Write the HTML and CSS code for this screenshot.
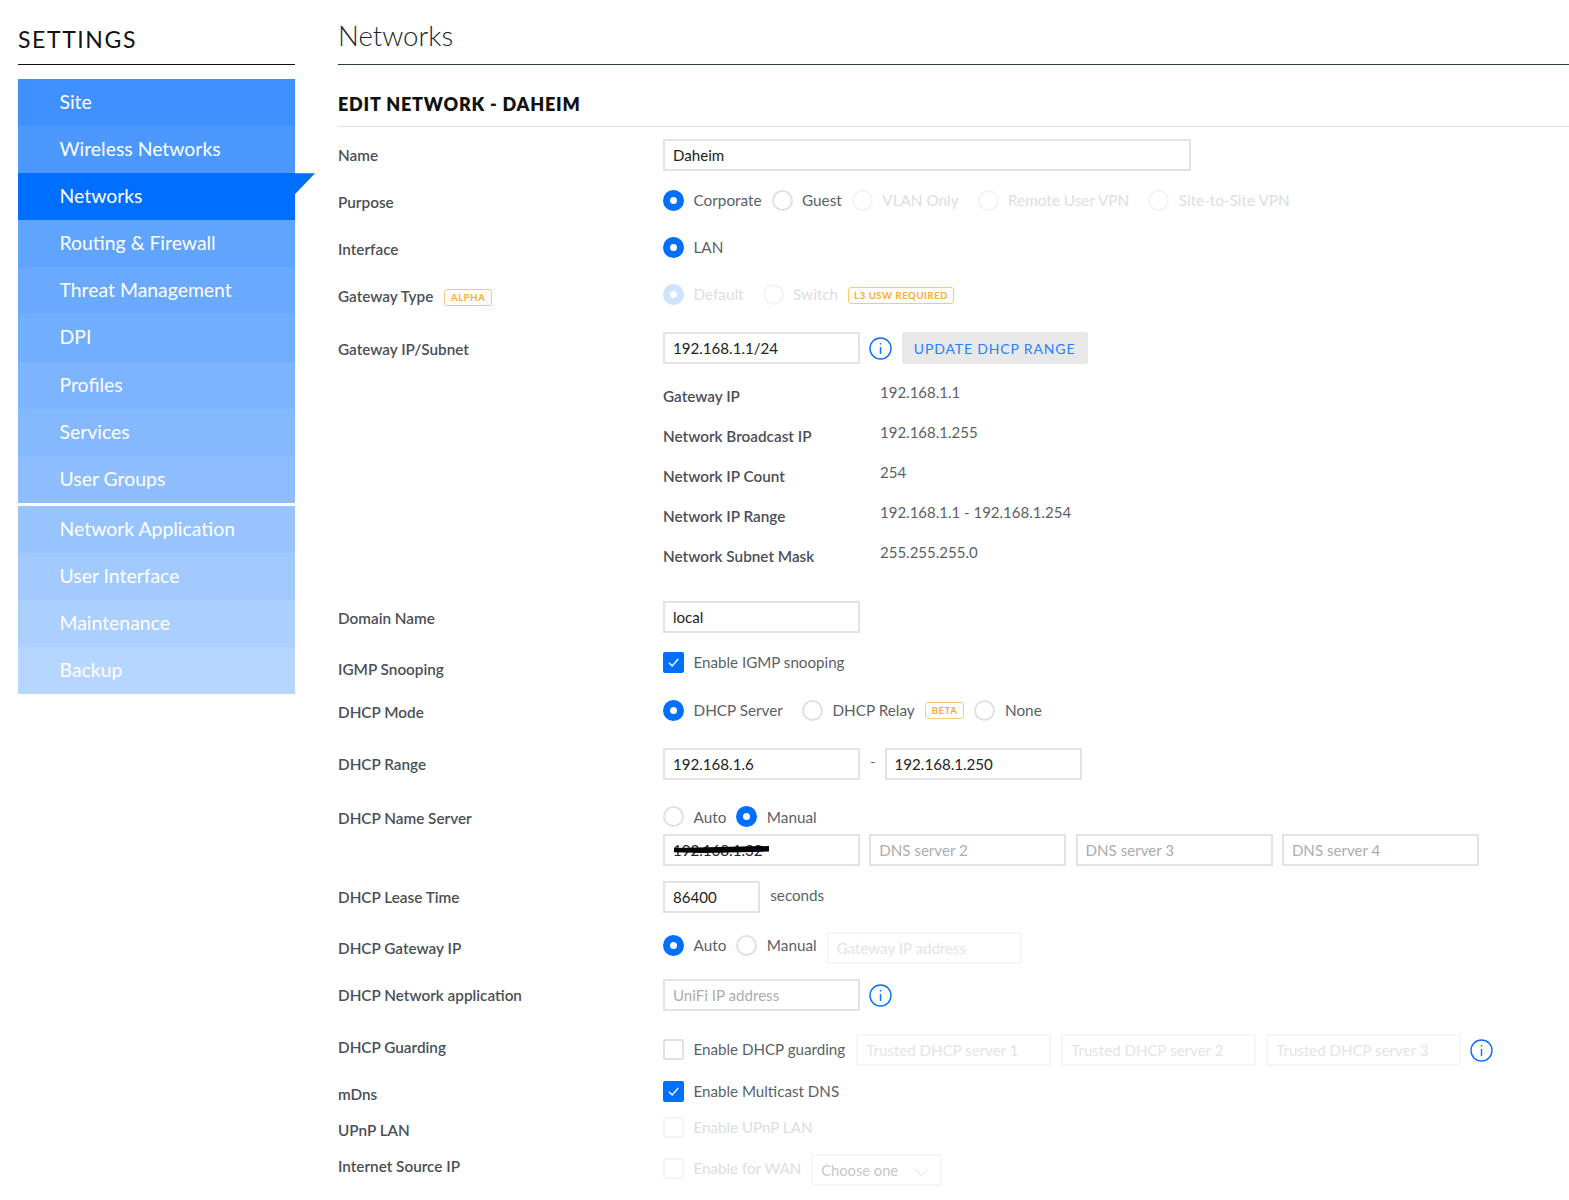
FILE: index.html
```html
<!DOCTYPE html>
<html lang="en">
<head>
<meta charset="utf-8">
<title>Networks - Settings</title>
<link rel="stylesheet" href="styles.css">
</head>
<body>
<div class="page">
  <aside class="sidebar">
    <h2 class="side-title">SETTINGS</h2>
    <nav class="menu">
      <a class="item i1">Site</a>
      <a class="item i2">Wireless Networks</a>
      <a class="item active">Networks</a>
      <a class="item i4">Routing &amp; Firewall</a>
      <a class="item i5">Threat Management</a>
      <a class="item i6">DPI</a>
      <a class="item i7">Profiles</a>
      <a class="item i8">Services</a>
      <a class="item i9">User Groups</a>
      <a class="item i10 group-start">Network Application</a>
      <a class="item i11">User Interface</a>
      <a class="item i12">Maintenance</a>
      <a class="item i13">Backup</a>
    </nav>
  </aside>
  <main class="main">
    <h1 class="page-title">Networks</h1>
    <h2 class="section-title">EDIT NETWORK - DAHEIM</h2>
    <form class="form">
      <div class="row r-name">
        <div class="label">Name</div>
        <div class="ctrl"><input class="field wide" value="Daheim"></div>
      </div>
      <div class="row r-47">
        <div class="label">Purpose</div>
        <div class="ctrl opts">
          <span class="opt"><i class="radio on"></i>Corporate</span>
          <span class="opt"><i class="radio"></i>Guest</span>
          <span class="opt off far"><i class="radio"></i>VLAN Only</span>
          <span class="opt off far"><i class="radio"></i>Remote User VPN</span>
          <span class="opt off"><i class="radio"></i>Site-to-Site VPN</span>
        </div>
      </div>
      <div class="row r-47">
        <div class="label">Interface</div>
        <div class="ctrl opts"><span class="opt"><i class="radio on"></i>LAN</span></div>
      </div>
      <div class="row r-gwtype">
        <div class="label">Gateway Type <span class="tag tag-alpha">ALPHA</span></div>
        <div class="ctrl opts">
          <span class="opt off far"><i class="radio on"></i>Default</span>
          <span class="opt off"><i class="radio"></i>Switch</span>
          <span class="tag tag-l3">L3 USW REQUIRED</span>
        </div>
      </div>
      <div class="row r-subnet">
        <div class="label">Gateway IP/Subnet</div>
        <div class="ctrl ctrl-up">
          <div class="inline">
            <input class="field" value="192.168.1.1/24">
            <svg class="info" viewBox="0 0 23 23"><circle cx="11.5" cy="11.5" r="10.5"/><path d="M11.5 10v7M11.5 6v1.6"/></svg>
            <button type="button" class="btn">UPDATE DHCP RANGE</button>
          </div>
          <dl class="facts">
            <dt>Gateway IP</dt><dd>192.168.1.1</dd>
            <dt>Network Broadcast IP</dt><dd>192.168.1.255</dd>
            <dt>Network IP Count</dt><dd>254</dd>
            <dt>Network IP Range</dt><dd>192.168.1.1 - 192.168.1.254</dd>
            <dt>Network Subnet Mask</dt><dd>255.255.255.0</dd>
          </dl>
        </div>
      </div>
      <div class="row r-domain">
        <div class="label">Domain Name</div>
        <div class="ctrl ctrl-up"><input class="field" value="local"></div>
      </div>
      <div class="row r-igmp">
        <div class="label">IGMP Snooping</div>
        <div class="ctrl opts opts-short">
          <span class="opt opt-check"><i class="check on"><svg viewBox="0 0 21 21"><path d="M6 10.8l3.2 3.2 6-7"/></svg></i>Enable IGMP snooping</span>
        </div>
      </div>
      <div class="row r-mode">
        <div class="label">DHCP Mode</div>
        <div class="ctrl opts">
          <span class="opt far"><i class="radio on"></i>DHCP Server</span>
          <span class="opt"><i class="radio"></i>DHCP Relay</span>
          <span class="tag tag-beta">BETA</span>
          <span class="opt"><i class="radio"></i>None</span>
        </div>
      </div>
      <div class="row r-range">
        <div class="label">DHCP Range</div>
        <div class="ctrl inline">
          <input class="field" value="192.168.1.6">
          <span class="dash">-</span>
          <input class="field" value="192.168.1.250">
        </div>
      </div>
      <div class="row r-ns">
        <div class="label">DHCP Name Server</div>
        <div class="ctrl">
          <div class="opts opts-ns">
            <span class="opt"><i class="radio"></i>Auto</span>
            <span class="opt"><i class="radio on"></i>Manual</span>
          </div>
          <div class="inline dns">
            <span class="redacted"><input class="field" value="192.168.1.32"></span>
            <input class="field" placeholder="DNS server 2">
            <input class="field" placeholder="DNS server 3">
            <input class="field" placeholder="DNS server 4">
          </div>
        </div>
      </div>
      <div class="row r-lease">
        <div class="label">DHCP Lease Time</div>
        <div class="ctrl inline inline-top">
          <input class="field short" value="86400">
          <span class="unit">seconds</span>
        </div>
      </div>
      <div class="row r-47b">
        <div class="label">DHCP Gateway IP</div>
        <div class="ctrl inline inline-top gw">
          <div class="opts opts-mid">
            <span class="opt"><i class="radio on"></i>Auto</span>
            <span class="opt"><i class="radio"></i>Manual</span>
          </div>
          <input class="field off-field" placeholder="Gateway IP address">
        </div>
      </div>
      <div class="row r-app">
        <div class="label">DHCP Network application</div>
        <div class="ctrl inline">
          <input class="field" placeholder="UniFi IP address">
          <svg class="info" viewBox="0 0 23 23"><circle cx="11.5" cy="11.5" r="10.5"/><path d="M11.5 10v7M11.5 6v1.6"/></svg>
        </div>
      </div>
      <div class="row r-guard">
        <div class="label">DHCP Guarding</div>
        <div class="ctrl inline inline-top guard">
          <span class="opt opt-check guard-opt"><i class="check"></i>Enable DHCP guarding</span>
          <input class="field off-field" placeholder="Trusted DHCP server 1">
          <input class="field off-field" placeholder="Trusted DHCP server 2">
          <input class="field off-field" placeholder="Trusted DHCP server 3">
          <svg class="info" viewBox="0 0 23 23"><circle cx="11.5" cy="11.5" r="10.5"/><path d="M11.5 10v7M11.5 6v1.6"/></svg>
        </div>
      </div>
      <div class="row r-mdns">
        <div class="label">mDns</div>
        <div class="ctrl opts opts-mid">
          <span class="opt opt-check"><i class="check on"><svg viewBox="0 0 21 21"><path d="M6 10.8l3.2 3.2 6-7"/></svg></i>Enable Multicast DNS</span>
        </div>
      </div>
      <div class="row r-upnp">
        <div class="label">UPnP LAN</div>
        <div class="ctrl opts opts-mid">
          <span class="opt opt-check off"><i class="check"></i>Enable UPnP LAN</span>
        </div>
      </div>
      <div class="row r-wan">
        <div class="label">Internet Source IP</div>
        <div class="ctrl inline inline-top wan">
          <span class="opt opt-check off wan-opt"><i class="check"></i>Enable for WAN</span>
          <div class="select">Choose one
            <svg viewBox="0 0 16 9"><path d="M1 1l7 7 7-7"/></svg>
          </div>
        </div>
      </div>
    </form>
  </main>
</div>
</body>
</html>
```

FILE: styles.css
```css
* { box-sizing: border-box; }
html, body { margin: 0; padding: 0; background: #fff; }
body { font-family: Lato, "Open Sans", sans-serif; color: #4a4f57; overflow-x: hidden; }
.page { display: flex; align-items: flex-start; padding-left: 18px; }

/* Sidebar */
.sidebar { width: 277px; flex: none; }
.side-title {
  margin: 0; height: 65px; padding-top: 25px;
  font-size: 23px; line-height: 28px; font-weight: 400; letter-spacing: 1.6px; color: #111;
  border-bottom: 1px solid #111;
}
.menu { margin-top: 14px; display: flex; flex-direction: column; }
.item {
  position: relative; display: block; height: 47.1px; padding-left: 41.5px;
  font-size: 19.4px; line-height: 46px; color: #fff;
}
.i1 { background: #3f91ff; }
.i2 { background: #4c98ff; }
.i4 { background: #5fa4ff; }
.i5 { background: #69a9ff; }
.i6 { background: #72aeff; }
.i7 { background: #7cb4ff; }
.i8 { background: #85b9ff; }
.i9 { background: #8ebeff; }
.i10 { background: #97c3ff; }
.i11 { background: #a2caff; }
.i12 { background: #abcfff; }
.i13 { background: #b7d6ff; }
.group-start { margin-top: 3px; }
.active { background: #006fff; }
.active::after {
  content: ""; position: absolute; left: 100%; top: 0; width: 20px; height: 21px;
  background: #006fff; clip-path: polygon(0 0, 100% 0, 0 100%);
}

/* Main */
.main { margin-left: 43px; flex: 1; min-width: 0; }
.page-title {
  margin: 0; height: 65px; padding-top: 18px;
  font-size: 27.6px; line-height: 36px; font-weight: 300; color: #1c2530;
  border-bottom: 1px solid #2d3a4a;
}
.section-title {
  margin: 0; height: 62px; padding-top: 27px;
  font-size: 18px; line-height: 24px; font-weight: 800; letter-spacing: 0.8px; color: #111;
  border-bottom: 1px solid #dfe1e3;
}
.form { padding-top: 12px; }

/* Rows */
.row { display: flex; align-items: flex-start; }
.label { width: 325px; flex: none; font-size: 15.3px; line-height: 32px; font-weight: 600; color: #4a4f57; }
.ctrl { min-width: 0; }
.r-name, .r-47 { height: 47px; }
.r-gwtype { height: 53px; }
.r-subnet { height: 269px; }
.r-domain { height: 51px; }
.r-igmp { height: 43px; }
.r-mode { height: 52px; }
.r-range { height: 54px; }
.r-ns { height: 79px; }
.r-lease { height: 51px; }
.r-47b { height: 47px; }
.r-app { height: 52px; }
.r-guard { height: 47px; }
.r-mdns, .r-upnp { height: 36px; }
.r-wan { height: 50px; }

.ctrl-up { margin-top: -1px; }
.inline { display: flex; align-items: center; gap: 9.3px; }
.inline-top { align-items: flex-start; }
.opts { display: flex; align-items: center; height: 28px; }
.opts-short { height: 18px; }
.opts-mid { height: 26px; }
.opts-ns { height: 29px; }

/* Options */
.opt { display: inline-flex; align-items: center; font-size: 15.3px; line-height: 20px; color: #5a5f68; margin-right: 10px; white-space: nowrap; }
.opt.far { margin-right: 19px; }
.opt.opt-check { font-size: 15.15px; }
.opt.off { color: #dcdee1; }
.radio, .check { flex: none; display: block; width: 21px; height: 21px; margin-right: 9.5px; border: 2px solid #dfe2e5; background: #fff; }
.radio { border-radius: 50%; }
.check { border-radius: 2px; }
.off .radio, .off .check { border-color: #f3f4f5; }
.radio.on { position: relative; background: #006fff; border-color: #006fff; }
.radio.on::after {
  content: ""; position: absolute; left: 5px; top: 5px; width: 7px; height: 7px;
  border-radius: 50%; background: #fff;
}
.off .radio.on { background: #cfe2ff; border-color: #cfe2ff; }
.check.on { background: #006fff; border-color: #006fff; position: relative; }
.check svg { position: absolute; left: -2px; top: -2px; width: 21px; height: 21px; fill: none; stroke: #fff; stroke-width: 1.3; }

/* Tags */
.tag {
  display: inline-block; height: 17px; padding: 0 6px; border: 1px solid #ffc879; border-radius: 3px;
  font-size: 9.5px; line-height: 15px; font-weight: 700; letter-spacing: 0.6px; color: #ffa92e; vertical-align: 1px;
}
.tag-alpha { margin-left: 7px; }
.tag-beta { margin-right: 10px; }
.tag-l3 { position: relative; top: 1px; padding: 0 5px; }

/* Inputs */
.field {
  display: block; width: 197px; height: 32px; padding: 0 8px 1px; margin: 0; flex: none;
  border: 2px solid #e1e4e7; border-radius: 0; outline: none; background: #fff;
  font-family: Lato, "Open Sans", sans-serif; font-size: 15.1px; color: #222;
}
.field::placeholder { color: #a9adb2; opacity: 1; }
.field.wide { width: 528px; }
.field.short { width: 97px; }
.off-field { border-color: #f5f6f7; }
.off-field::placeholder { color: #e3e5e7; }
.unit { margin-left: 1px; font-size: 15.2px; line-height: 28px; color: #5a5f68; }
.dash { width: 5px; margin-left: 1px; font-size: 14px; color: #5a5f68; position: relative; top: -3px; }
.dns { margin-top: 3px; }
.redacted { position: relative; display: block; flex: none; }
.redacted::after {
  content: ""; position: absolute; left: 11px; top: 12px; width: 95px; height: 7px;
  background: #000; clip-path: polygon(0 30%, 100% 0, 100% 80%, 30% 100%, 0 90%);
}

/* Info and button */
.info { flex: none; width: 23px; height: 23px; fill: none; stroke: #0a6fff; stroke-width: 1.4; }
.btn {
  height: 32px; width: 186px; padding: 0; border: 0; border-radius: 3px; background: #e8e8e8;
  font-family: Lato, "Open Sans", sans-serif; font-size: 14px; letter-spacing: 0.85px; color: #2a7fff;
}

/* Facts */
.facts { display: grid; grid-template-columns: 217px auto; grid-auto-rows: 40px; margin: 12px 0 0; }
.facts dt { font-size: 15.3px; line-height: 40px; font-weight: 600; color: #4a4f57; }
.facts dd { margin: 0; font-size: 15px; line-height: 32px; color: #5a5f68; }

/* Gateway / guard / WAN */
.gw { gap: 10px; }
.gw .opt:last-child { margin-right: 0; }
.gw .off-field { width: 195px; }
.guard { gap: 10px; padding-top: 3px; }
.guard .field { width: 195px; }
.guard-opt { height: 30px; margin-right: 1px; }
.guard .info { margin-top: 5px; margin-left: -1px; }
.wan { gap: 10px; padding-top: 4px; }
.wan-opt { height: 28px; margin-right: 0; }
.select {
  position: relative; width: 131px; height: 32px; padding-left: 8px;
  border: 2px solid #f5f6f7; font-size: 14.7px; line-height: 29px; color: #c4c7cb;
}
.select svg { position: absolute; right: 11px; top: 12px; width: 15px; height: 9px; fill: none; stroke: #e6e8ea; stroke-width: 1.2; }
```
